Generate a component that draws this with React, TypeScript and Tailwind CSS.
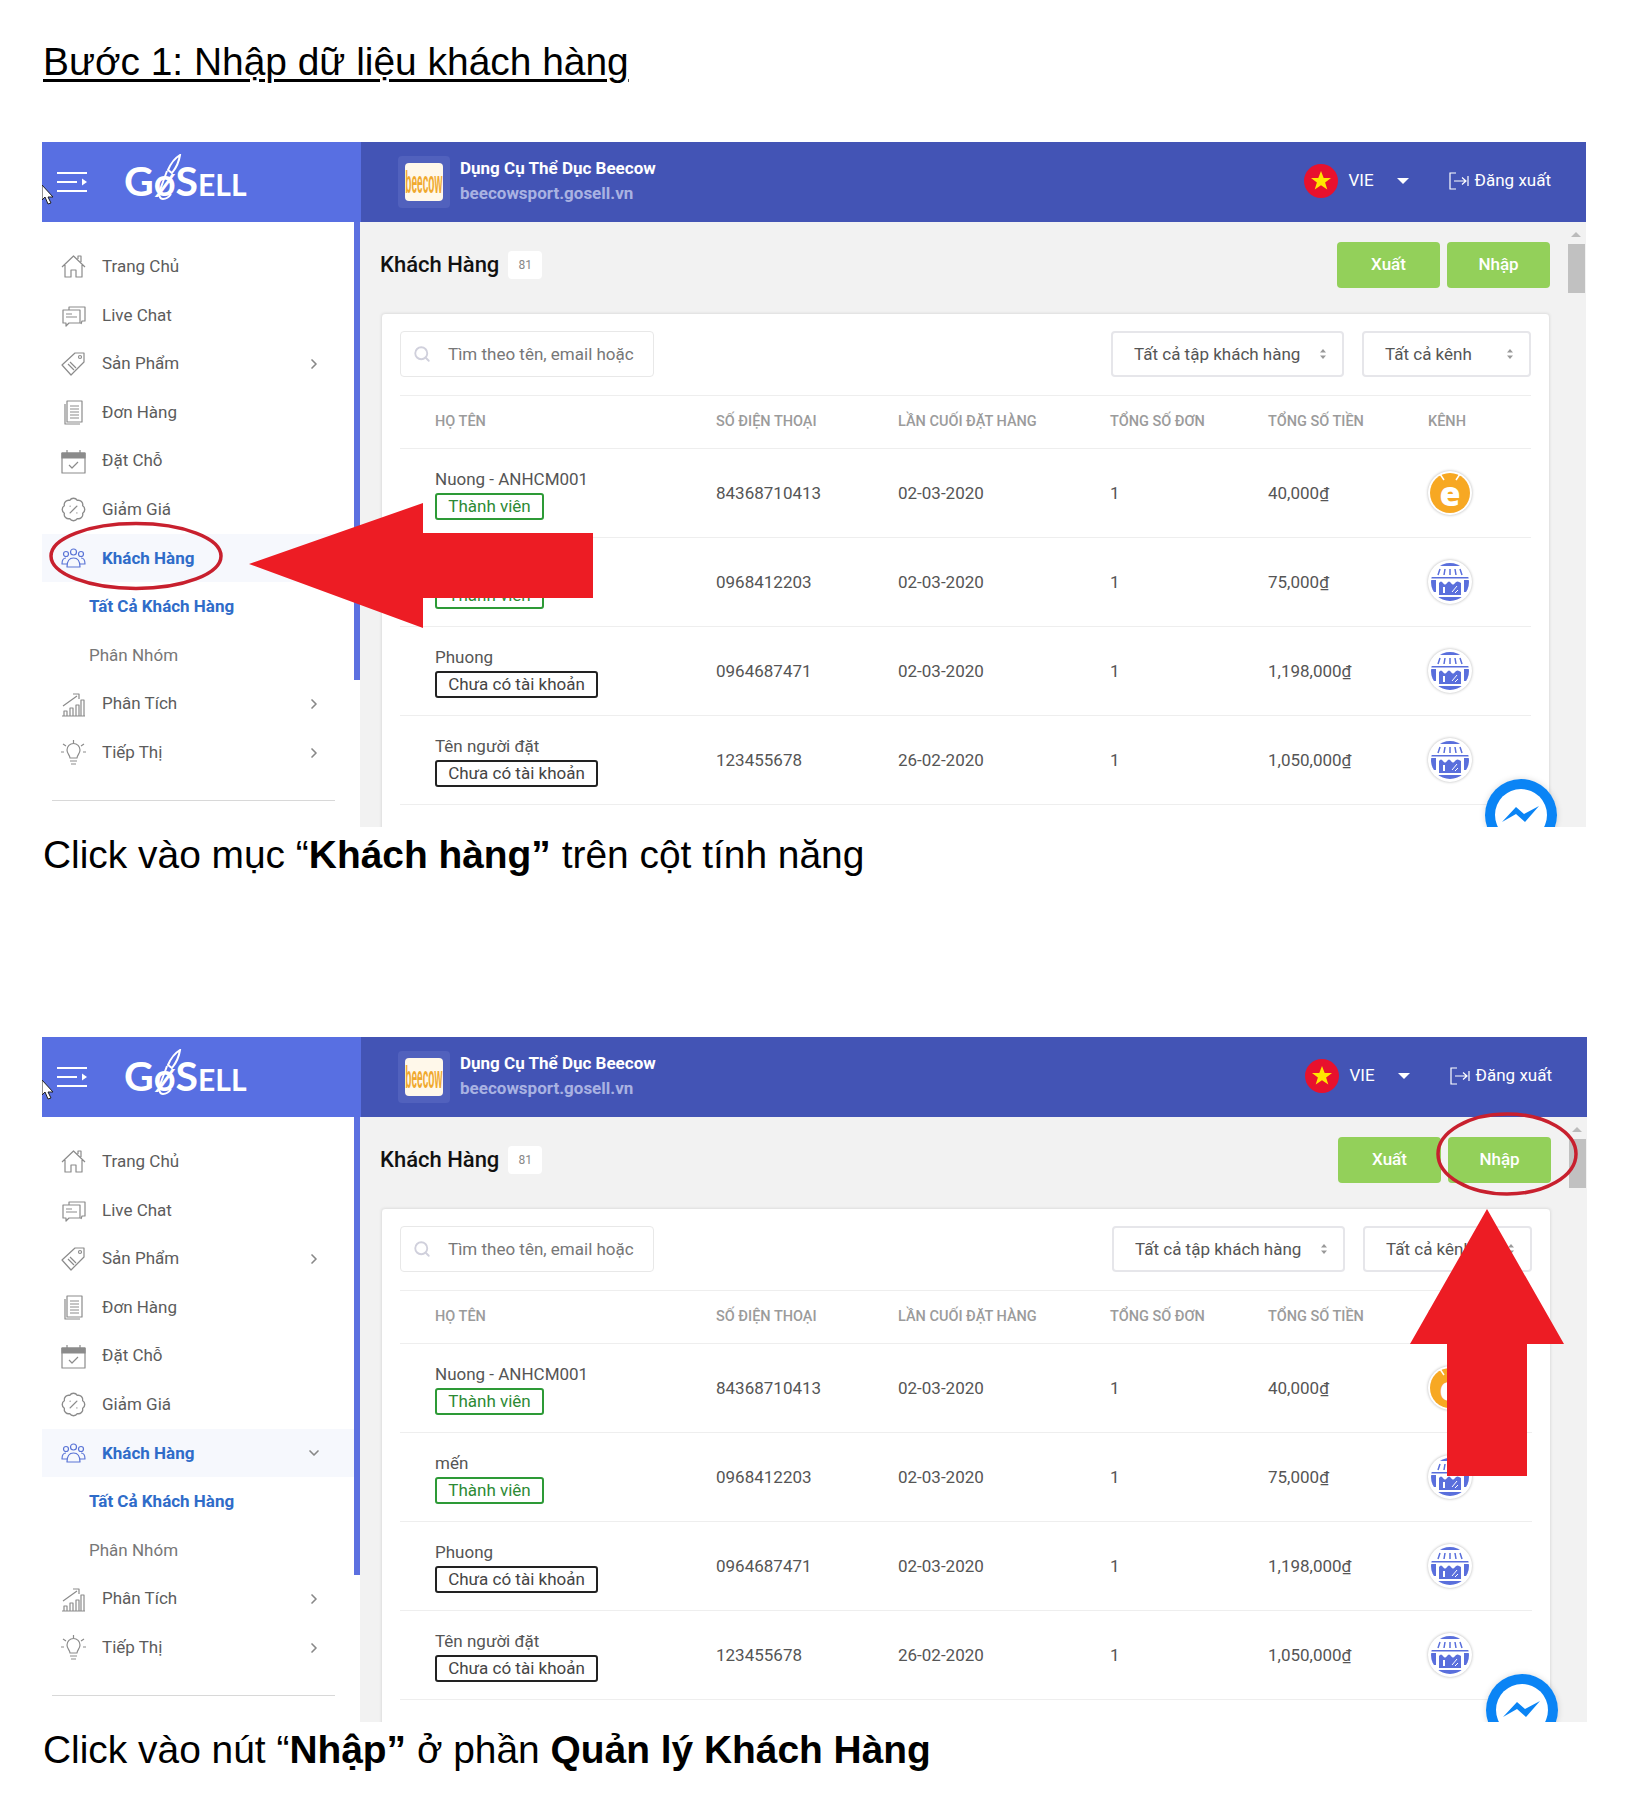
import { BadgePercent, ChevronDown, ChevronRight, Search } from 'lucide-react'
import type { ReactNode } from 'react'

function Ico({ children }: { children: ReactNode }) {
  return (
    <svg width="27" height="27" viewBox="0 0 27 27" fill="none" stroke="currentColor" strokeWidth="1.200" strokeLinejoin="round">
      {children}
    </svg>
  )
}

const NAV_TOP = [
  {
    label: 'Trang Chủ',
    icon: (
      <Ico>
        <path d="M2 14 13.500 3 25 14M18 6V3h3v6M5 12v12h6v-7h5v7h6V12" />
      </Ico>
    ),
  },
  {
    label: 'Live Chat',
    icon: (
      <Ico>
        <path d="M9 8V5h16v14h-3l-1 3M3 8h17v13H9l-3 3v-3H3zM6 12h6M6 15h11" />
      </Ico>
    ),
  },
  {
    label: 'Sản Phẩm',
    icon: (
      <Ico>
        <path d="M15 3h9v9L11 25 2 15zM8 14l6 6M10 12l6 6" />
        <circle cx="20" cy="7" r="1.500" />
      </Ico>
    ),
    more: true,
  },
  {
    label: 'Đơn Hàng',
    icon: (
      <Ico>
        <path d="M7 2h15v21H7zM5 5v20h15M10 7h9M10 10h9M10 13h9M10 16h9M10 19h9" />
      </Ico>
    ),
  },
  {
    label: 'Đặt Chỗ',
    icon: (
      <Ico>
        <path d="M2 5h23v20H2z" />
        <path d="M2 5h23v5H2z" fill="currentColor" />
        <path d="M7 2v4M20 2v4M9 17l3 3 6-6" />
      </Ico>
    ),
  },
  { label: 'Giảm Giá', icon: <BadgePercent size={27} strokeWidth={1.2} /> },
]

const ROWS = [
  { name: 'Nuong - ANHCM001', member: true, phone: '84368710413', date: '02-03-2020', money: '40,000', shop: false },
  { name: 'mến', member: true, phone: '0968412203', date: '02-03-2020', money: '75,000', shop: true },
  { name: 'Phuong', member: false, phone: '0964687471', date: '02-03-2020', money: '1,198,000', shop: true },
  { name: 'Tên người đặt', member: false, phone: '123455678', date: '26-02-2020', money: '1,050,000', shop: true },
]

const COLS = 'grid grid-cols-[316px_182px_212px_158px_160px_1fr] items-center'

function Sort() {
  return (
    <svg width="8" height="12" viewBox="0 0 8 12" fill="#999">
      <path d="M4 1 7 4.500H1zM4 11 1 7.500h6z" />
    </svg>
  )
}

function NavItem({ icon, label, more }: { icon: ReactNode; label: string; more?: boolean }) {
  return (
    <div className="flex h-[48.6px] items-center pt-[1px] pr-[32px] pl-[18px] text-[17px] text-[#5c5c5c]">
      <span className="w-[42px] shrink-0 text-[#8b8b8b]">{icon}</span>
      <span>{label}</span>
      {more && <ChevronRight size={16} className="ml-auto text-[#888]" strokeWidth={2.5} />}
    </div>
  )
}

function StoreIcon() {
  return (
    <div className="-mt-[2px] flex h-[44px] w-[44px] items-center justify-center rounded-full bg-white shadow-[0_0_3px_rgba(0,0,0,0.3)]">
      <svg width="40" height="40" viewBox="0 0 40 40">
        <clipPath id="store-clip">
          <circle cx="20" cy="20" r="19" />
        </clipPath>
        <g clipPath="url(#store-clip)" fill="#5a6fdc">
          <rect x="0" y="0" width="40" height="4" />
          <path d="M10 7 8 13M15 7l-1 6M20 7v6M25 7l1 6M30 7l2 6" stroke="#5a6fdc" strokeWidth="1.500" />
          <rect x="0" y="15" width="40" height="1.500" />
          <path d="M0 18h6v12H0zM40 18h-6v12h6z" />
          <path d="M9 21q2-3 4 0t4 0 4 0 4 0 6 0v12H9z" />
          <rect x="13" y="25" width="2" height="6" fill="#fff" />
          <path d="m22 30 5-6M25 31l3-3" stroke="#fff" strokeWidth="1" />
          <rect x="0" y="35" width="40" height="5" />
        </g>
      </svg>
    </div>
  )
}

function OrangeIcon() {
  return (
    <div className="relative -mt-[2px] flex h-[44px] w-[44px] items-center justify-center rounded-full bg-white shadow-[0_0_3px_rgba(0,0,0,0.3)]">
      <div className="flex h-[40px] w-[40px] items-center justify-center rounded-full bg-[#f7a823] pt-[1px] pb-[2px] font-['Open_Sans',sans-serif] text-[34px] leading-none font-extrabold text-white">
        e
      </div>
      <svg className="absolute top-[2px] left-[2px]" width="40" height="12" viewBox="0 0 40 12" fill="none" stroke="#fff" strokeWidth="1.500">
        <path d="m10 1 4 6M30 1l-4 6" />
      </svg>
    </div>
  )
}

function Panel({ overlay, expanded, wide }: { overlay: ReactNode; expanded?: boolean; wide?: boolean }) {
  return (
    <div className={`relative ml-[42px] h-[685px] ${wide ? 'w-[1545px]' : 'w-[1544px]'}`}>
      <div className="flex h-full flex-col overflow-hidden font-['Roboto',sans-serif]">
        <header className="flex h-[80px] shrink-0 bg-[#4354b5] text-white">
          <div className="flex w-[319px] shrink-0 items-center bg-[#586fe2] pl-[15px]">
            <svg width="30" height="22" viewBox="0 0 30 22" fill="none" stroke="#fff" strokeWidth="2">
              <path d="M0 2h30M0 11h20M0 20h30" />
              <path d="M25 7.500v7l5-3.500z" fill="#fff" stroke="none" />
            </svg>
            <div className="relative ml-[37px] mb-[4px] flex items-baseline font-['Lato',sans-serif] font-bold">
              <span className="text-[41px] leading-none">G</span>
              <span className="text-[38px] leading-none">ø</span>
              <span className="text-[41px] leading-none">S</span>
              <span className="text-[30px] leading-none">ELL</span>
              <svg className="absolute top-[-6px] left-[29px]" width="30" height="50" viewBox="0 0 30 50" fill="none" stroke="#fff" strokeWidth="2">
                <path d="M27 1c-5 3-9 8-12 15l4 3c4-5 7-11 8-18zM14 17 7 36c-2 5 0 9 3 9 3 0 6-2 8-5" />
              </svg>
            </div>
          </div>
          <div className="flex flex-1 items-center pl-[37px]">
            <div className="flex h-[52px] w-[52px] items-center justify-center rounded bg-[#5161bd]">
              <div className="flex h-[38px] w-[38px] items-center justify-center overflow-hidden rounded-sm bg-[#fff8ea]">
                <span className="scale-x-[0.78] scale-y-[2.4] font-['Liberation_Sans',sans-serif] text-[13px] leading-none font-bold text-[#f0a92e]">beecow</span>
              </div>
            </div>
            <div className="ml-[10px] pb-[2px] text-[17px] leading-[25px] font-bold">
              <div>Dụng Cụ Thể Dục Beecow</div>
              <div className="text-[#a9b2e2]">beecowsport.gosell.vn</div>
            </div>
            <div className="ml-auto flex items-center pr-[35px] pb-[2px] text-[17px]">
              <svg width="34" height="34" viewBox="0 0 34 34">
                <circle cx="17" cy="17" r="17" fill="#e8112d" />
                <path d="m17 7 2.700 7h7.300l-5.900 4.400 2.200 7.100-6.300-4.300-6.300 4.300 2.200-7.100L7 14h7.300z" fill="#ffe600" />
              </svg>
              <span className="ml-[10px]">VIE</span>
              <span className="mr-[40px] ml-[23px] h-0 w-0 border-x-[6px] border-t-[6px] border-x-transparent border-t-white" />
              <svg width="20" height="18" viewBox="0 0 20 18" fill="none" stroke="#fff" strokeWidth="1.200">
                <path d="M7 1H1v16h6M5 9h12M13 5.500 17 9l-4 3.500M19 4v10" />
              </svg>
              <span className="ml-[6px]">Đăng xuất</span>
            </div>
          </div>
        </header>

        <div className="flex min-h-0 flex-1">
          <div className="flex w-[318px] shrink-0 bg-white">
            <nav className="w-[312px] shrink-0 pt-[20px]">
              {NAV_TOP.map((n) => (
                <NavItem key={n.label} {...n} />
              ))}
              <div className="flex h-[48.6px] items-center bg-[#f6f8fd] pt-[1px] pr-[32px] pl-[18px] text-[17px] font-bold text-[#2f6cc9]">
                <span className="w-[42px] shrink-0 text-[#5a74d6]">
                  <Ico>
                    <circle cx="13.500" cy="7" r="3" />
                    <circle cx="6" cy="9" r="2.500" />
                    <circle cx="21" cy="9" r="2.500" />
                    <path d="M7 22c0-6 2-9 6.500-9s6.500 3 6.500 9zM7 19H2c0-4 1-6 4-6M20 19h5c0-4-1-6-4-6" />
                  </Ico>
                </span>
                <span>Khách Hàng</span>
                {expanded && <ChevronDown size={16} className="ml-auto text-[#888]" strokeWidth={2.5} />}
              </div>
              <div className="flex h-[48.6px] items-center pt-[1px] pl-[47px] text-[17px] font-bold text-[#2f6cc9]">Tất Cả Khách Hàng</div>
              <div className="flex h-[48.6px] items-center pt-[1px] pl-[47px] text-[17px] text-[#777]">Phân Nhóm</div>
              <NavItem
                icon={
                  <Ico>
                    <path d="M2 25h23M4 25v-5h3v5M10 25v-8h3v8M16 25v-11h3v11M21 25V9h3v16M3 15 17 5M13 3h6v5" />
                  </Ico>
                }
                label="Phân Tích"
                more
              />
              <NavItem
                icon={
                  <Ico>
                    <path d="M13.500 1v3M3 5l3 2M24 5l-3 2M1 13h3M23 13h3M10 19c0-3-3-4-3-8a6.500 6.500 0 0 1 13 0c0 4-3 5-3 8zM10 22h7M11 25h5" />
                  </Ico>
                }
                label="Tiếp Thị"
                more
              />
              <div className="mt-[23px] mr-[19px] ml-[10px] border-t border-[#d8d8d8]" />
            </nav>
            <div className="h-[458px] w-[6px] bg-[#5c70e0]" />
          </div>

          <main className="relative flex-1 overflow-hidden bg-[#f2f2f2] pr-[36px] pl-[21px]">
            <div className="flex h-[91px] items-center pb-[6px]">
              <h2 className="-ml-[1px] text-[22px] font-medium text-[#111]">Khách Hàng</h2>
              <span className="ml-[9px] flex h-[28px] w-[34px] items-center justify-center rounded bg-white text-[12px] text-[#888]">81</span>
              <button className="ml-auto h-[46px] w-[103px] rounded-sm bg-[#93d05a] text-[17px] font-medium text-white">Xuất</button>
              <button className="ml-[7px] h-[46px] w-[103px] rounded-sm bg-[#93d05a] text-[17px] font-medium text-white">Nhập</button>
            </div>
            <section className="rounded-sm border border-[#e4e4e4] bg-white px-[18px] pt-[17px] pb-[40px] text-[17px] text-[#555] shadow-[0_0_3px_rgba(0,0,0,0.08)]">
              <div className="flex items-center justify-between border-b border-[#eee] pb-[18px]">
                <div className="flex h-[46px] w-[254px] items-center rounded border border-[#e8e8e8] pl-[12px] text-[#777]">
                  <Search size={18} className="text-[#d0d0dc]" strokeWidth={2.5} />
                  <span className="ml-[17px] pt-[1px]">Tìm theo tên, email hoặc</span>
                </div>
                <div className="flex gap-[18px]">
                  <div className="flex h-[46px] w-[233px] items-center justify-between rounded border-2 border-[#e6e6ea] pr-[15px] pl-[21px]">
                    <span className="pt-[1px]">Tất cả tập khách hàng</span>
                    <Sort />
                  </div>
                  <div className="flex h-[46px] w-[169px] items-center justify-between rounded border-2 border-[#e6e6ea] pr-[15px] pl-[21px]">
                    <span className="pt-[1px]">Tất cả kênh</span>
                    <Sort />
                  </div>
                </div>
              </div>
              <div className={`${COLS} h-[53px] border-b border-[#eee] text-[14.500px] font-medium text-[#9b9b9b]`}>
                <span className="pl-[35px]">HỌ TÊN</span>
                <span>SỐ ĐIỆN THOẠI</span>
                <span>LẦN CUỐI ĐẶT HÀNG</span>
                <span>TỔNG SỐ ĐƠN</span>
                <span>TỔNG SỐ TIỀN</span>
                <span>KÊNH</span>
              </div>
              {ROWS.map((r) => (
                <div key={r.phone} className={`${COLS} h-[89px] border-b border-[#eee] pt-[2px]`}>
                  <div className="pl-[35px]">
                    <div className="h-[20px] leading-[20px]">{r.name}</div>
                    <div
                      className={`mt-[4px] flex h-[27px] items-center justify-center rounded-[3px] border-2 pt-[1px] ${
                        r.member ? 'w-[109px] border-[#2d9a36] text-[#2d8a34]' : 'w-[163px] border-[#222] text-[#444]'
                      }`}
                    >
                      {r.member ? 'Thành viên' : 'Chưa có tài khoản'}
                    </div>
                  </div>
                  <span>{r.phone}</span>
                  <span>{r.date}</span>
                  <span>1</span>
                  <span>{r.money}₫</span>
                  {r.shop ? <StoreIcon /> : <OrangeIcon />}
                </div>
              ))}
            </section>
            <div className="absolute top-[10px] right-[1px] flex w-[18px] flex-col items-center">
              <span className="h-0 w-0 border-x-[5px] border-b-[5px] border-x-transparent border-b-[#bbb]" />
              <span className="mt-[7px] h-[49px] w-[17px] bg-[#c1c1c1]" />
            </div>
            <div className="absolute top-[557px] right-[29px] flex h-[72px] w-[72px] items-center justify-center rounded-full bg-white shadow-[0_0_6px_rgba(0,0,0,0.15)]">
              <svg width="72" height="72" viewBox="0 0 72 72">
                <circle cx="36" cy="36" r="36" fill="#0a84f5" />
                <circle cx="36" cy="36" r="26" fill="#fff" />
                <path d="m17 43 14-15 8 7 15-8-14 16-9-8z" fill="#0a84f5" />
              </svg>
            </div>
          </main>
        </div>
      </div>
      {/* cursor over the top left corner */}
      <svg className="absolute top-[43px] left-0" width="12" height="20" viewBox="0 0 12 20" fill="#fff" stroke="#222" strokeWidth="1">
        <path d="M0 0v15l3-3 3 7 3-1-3-6h5z" />
      </svg>
      {overlay}
    </div>
  )
}

function ArrowLeft() {
  return (
    <svg className="absolute top-0 left-0" width="600" height="600" viewBox="0 0 600 600">
      <ellipse cx="94" cy="414" rx="85" ry="32.500" fill="none" stroke="#c8202e" strokeWidth="3.500" />
      <path d="M207 422 381 361v30h170v65H381v30z" fill="#ed1c24" />
    </svg>
  )
}

function ArrowUp() {
  return (
    <svg className="absolute top-0 right-0" width="200" height="460" viewBox="1345 0 200 460">
      <ellipse cx="1465" cy="117" rx="69" ry="40" fill="none" stroke="#c8202e" strokeWidth="3.500" />
      <path d="M1445 172 1522 307h-37v132h-80V307h-37z" fill="#ed1c24" />
    </svg>
  )
}

export default function App() {
  return (
    <div className="h-[1806px] w-[1631px] bg-white font-['Liberation_Sans',sans-serif] text-[38.900px] text-black">
      <div className="h-[142px] pt-[38px] pl-[43px]">
        <h1 className="text-[38.900px] leading-[48px] underline decoration-[3px] underline-offset-[4px]">Bước 1: Nhập dữ liệu khách hàng</h1>
      </div>
      <Panel overlay={<ArrowLeft />} />
      <p className="h-[210px] pt-[4px] pl-[43px] leading-[48px]">
        Click vào mục “<b>Khách hàng”</b> trên cột tính năng
      </p>
      <Panel overlay={<ArrowUp />} expanded wide />
      <p className="pt-[4px] pl-[43px] leading-[48px]">
        Click vào nút “<b>Nhập”</b> ở phần <b>Quản lý Khách Hàng</b>
      </p>
    </div>
  )
}
